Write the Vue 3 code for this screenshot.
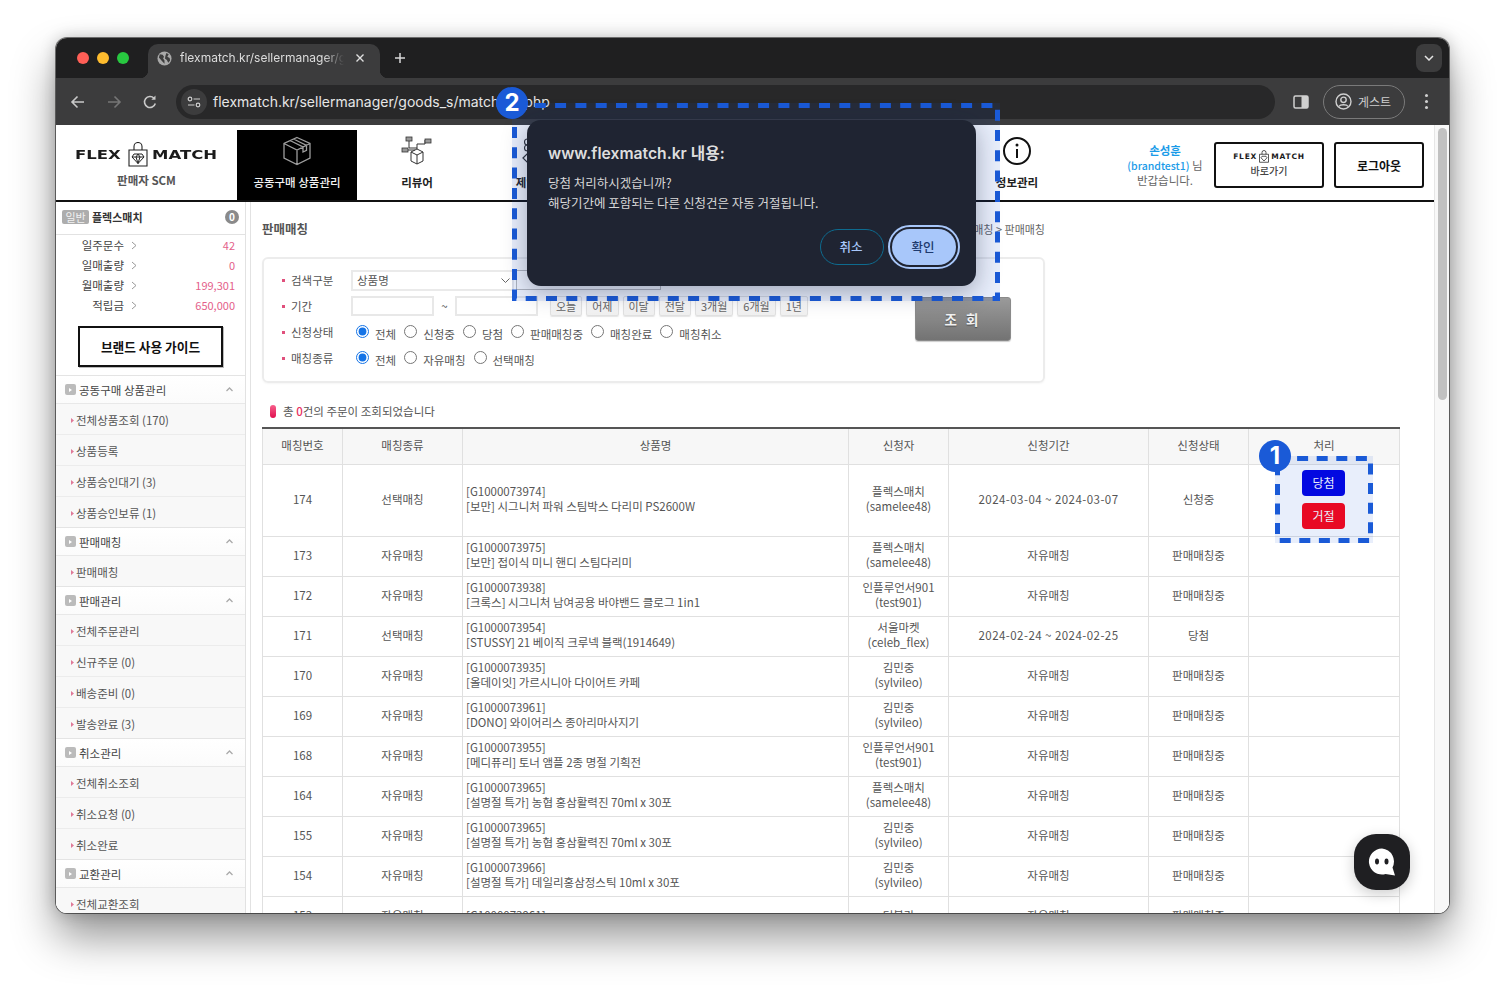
<script setup>
const summary = [
  { label: '일주문수', value: '42' },
  { label: '일매출량', value: '0' },
  { label: '월매출량', value: '199,301' },
  { label: '적립금', value: '650,000' },
]
const menu = [
  { title: '공동구매 상품관리', items: ['전체상품조회 (170)', '상품등록', '상품승인대기 (3)', '상품승인보류 (1)'] },
  { title: '판매매칭', items: ['판매매칭'] },
  { title: '판매관리', items: ['전체주문관리', '신규주문 (0)', '배송준비 (0)', '발송완료 (3)'] },
  { title: '취소관리', items: ['전체취소조회', '취소요청 (0)', '취소완료'] },
  { title: '교환관리', items: ['전체교환조회'] },
]
const periods = ['오늘', '어제', '이달', '전달', '3개월', '6개월', '1년']
const statusOptions = ['전체', '신청중', '당첨', '판매매칭중', '매칭완료', '매칭취소']
const kindOptions = ['전체', '자유매칭', '선택매칭']
const columns = ['매칭번호', '매칭종류', '상품명', '신청자', '신청기간', '신청상태', '처리']
const rows = [
  { no: 174, kind: '선택매칭', code: '[G1000073974]', name: '[보만] 시그니처 파워 스팀박스 다리미 PS2600W', user: '플렉스매치', id: '(samelee48)', period: '2024-03-04 ~ 2024-03-07', state: '신청중', actions: true },
  { no: 173, kind: '자유매칭', code: '[G1000073975]', name: '[보만] 접이식 미니 핸디 스팀다리미', user: '플렉스매치', id: '(samelee48)', period: '자유매칭', state: '판매매칭중' },
  { no: 172, kind: '자유매칭', code: '[G1000073938]', name: '[크록스] 시그니처 남여공용 바야밴드 클로그 1in1', user: '인플루언서901', id: '(test901)', period: '자유매칭', state: '판매매칭중' },
  { no: 171, kind: '선택매칭', code: '[G1000073954]', name: '[STUSSY] 21 베이직 크루넥 블랙(1914649)', user: '서울마켓', id: '(celeb_flex)', period: '2024-02-24 ~ 2024-02-25', state: '당첨' },
  { no: 170, kind: '자유매칭', code: '[G1000073935]', name: '[올데이잇] 가르시니아 다이어트 카페', user: '김민중', id: '(sylvileo)', period: '자유매칭', state: '판매매칭중' },
  { no: 169, kind: '자유매칭', code: '[G1000073961]', name: '[DONO] 와이어리스 종아리마사지기', user: '김민중', id: '(sylvileo)', period: '자유매칭', state: '판매매칭중' },
  { no: 168, kind: '자유매칭', code: '[G1000073955]', name: '[메디퓨리] 토너 앰플 2종 명절 기획전', user: '인플루언서901', id: '(test901)', period: '자유매칭', state: '판매매칭중' },
  { no: 164, kind: '자유매칭', code: '[G1000073965]', name: '[설명절 특가] 농협 홍삼활력진 70ml x 30포', user: '플렉스매치', id: '(samelee48)', period: '자유매칭', state: '판매매칭중' },
  { no: 155, kind: '자유매칭', code: '[G1000073965]', name: '[설명절 특가] 농협 홍삼활력진 70ml x 30포', user: '김민중', id: '(sylvileo)', period: '자유매칭', state: '판매매칭중' },
  { no: 154, kind: '자유매칭', code: '[G1000073966]', name: '[설명절 특가] 데일리홍삼정스틱 10ml x 30포', user: '김민중', id: '(sylvileo)', period: '자유매칭', state: '판매매칭중' },
  { no: 153, kind: '자유매칭', code: '[G1000073961]', name: '', user: '더블랑', id: '', period: '자유매칭', state: '판매매칭중' },
]
</script>

<template>
  <div class="stage">
    <div class="win">
      <div class="tabstrip">
        <div class="lights"><i class="red"></i><i class="yellow"></i><i class="green"></i></div>
        <div class="tab">
          <svg class="globe" width="15" height="15" viewBox="0 0 16 16"><circle cx="8" cy="8" r="7.500" fill="#a9a9a9"/><path d="M3 3.500l3 .5 1.500 2-1 2 1.500 2v3.500L5 10.500 2 7zM10 2l2.500 1.500L11 6l2.500 1.500L14 10l-2 2.500-1.500-3-2-1.500.5-3z" fill="#3d3d3d"/></svg>
          <span class="tab-title">flexmatch.kr/sellermanager/goods_s</span>
          <svg class="tab-x" width="10" height="10" viewBox="0 0 10 10"><path d="M1.500 1.500l7 7M8.500 1.500l-7 7" stroke="#e0e0e0" stroke-width="1.400"/></svg>
        </div>
        <svg class="plus" width="12" height="12" viewBox="0 0 12 12"><path d="M6 1v10M1 6h10" stroke="#d8d8d8" stroke-width="1.500"/></svg>
        <div class="tab-menu"><svg width="10" height="6" viewBox="0 0 10 6"><path d="M1 1l4 4 4-4" fill="none" stroke="#e4e4e4" stroke-width="1.500"/></svg></div>
      </div>

      <div class="toolbar">
        <svg class="nav-ico" width="16" height="14" viewBox="0 0 16 14"><path d="M14 7H2.500M7.500 1.500L2 7l5.500 5.500" fill="none" stroke="#c9c9c9" stroke-width="1.600"/></svg>
        <svg class="nav-ico" width="16" height="14" viewBox="0 0 16 14"><path d="M2 7h11.500M8.500 1.500L14 7l-5.500 5.500" fill="none" stroke="#767676" stroke-width="1.600"/></svg>
        <svg class="nav-ico last" width="16" height="16" viewBox="0 0 16 16"><path d="M13.300 9.500A5.500 5.500 0 1 1 12 4.200" fill="none" stroke="#c9c9c9" stroke-width="1.600"/><path d="M13.500 1.500v4.200H9.300z" fill="#c9c9c9"/></svg>
        <div class="omnibox">
          <span class="tune">
            <svg width="14" height="12" viewBox="0 0 14 12"><circle cx="3" cy="3" r="1.800" fill="none" stroke="#d0d0d0" stroke-width="1.200"/><path d="M6.500 3H13M1 9h6.500" stroke="#d0d0d0" stroke-width="1.200"/><circle cx="11" cy="9" r="1.800" fill="none" stroke="#d0d0d0" stroke-width="1.200"/></svg>
          </span>
          <span class="url">flexmatch.kr/sellermanager/goods_s/match_all.php</span>
        </div>
        <svg class="panel-ico" width="16" height="14" viewBox="0 0 16 14"><rect x="1" y="1" width="14" height="12" rx="1.500" fill="none" stroke="#d0d0d0" stroke-width="1.500"/><rect x="8.500" y="1" width="6.500" height="12" fill="#d0d0d0"/></svg>
        <div class="guest">
          <svg width="17" height="17" viewBox="0 0 17 17"><circle cx="8.500" cy="8.500" r="7.500" fill="none" stroke="#cfcfcf" stroke-width="1.400"/><circle cx="8.500" cy="6.800" r="2.700" fill="none" stroke="#cfcfcf" stroke-width="1.400"/><path d="M3.800 13.500c1.500-2.400 7.900-2.400 9.400 0" fill="none" stroke="#cfcfcf" stroke-width="1.400"/></svg>
          <span>게스트</span>
        </div>
        <div class="dots"><i></i><i></i><i></i></div>
      </div>

      <div class="page">
        <div class="content">
          <header class="site-head">
            <div class="brand">
              <div class="logo">
                <span class="w-flex">FLEX</span>
                <svg class="bag" width="20" height="25" viewBox="0 0 20 25"><path d="M1 8h18v16H1z" fill="none" stroke="#222" stroke-width="1.100"/><path d="M6 8V4.500a4 4 0 0 1 8 0V8" fill="none" stroke="#222" stroke-width="1.100"/><path d="M6 12h8l2 3-6 6.500L4 15zM4 15h12M10 21.500L8 15l2-3 2 3z" fill="none" stroke="#222" stroke-width="1"/></svg>
                <span class="w-match">MATCH</span>
              </div>
              <div class="brand-sub">판매자 SCM</div>
            </div>

            <div class="nav-tab active">
              <svg width="30" height="30" viewBox="0 0 30 30"><path d="M15 1.500L28 7.500V22L15 28.500 2 22V7.500zM2 7.500L15 14l13-6.500M15 14v14.500M8 4.500L21 11v5l3.500-1.700v-5L11.500 3" fill="none" stroke="#9d9d9d" stroke-width="1.300"/></svg>
              <span>공동구매 상품관리</span>
            </div>
            <div class="nav-tab">
              <svg width="32" height="30" viewBox="0 0 32 30"><path d="M10 16l6-3 6 3v9l-6 3-6-3zM10 16l6 3 6-3M16 19v9" fill="none" stroke="#333" stroke-width="1"/><path d="M8 5v7h8M7 14h7M16 13V8h8V4" fill="none" stroke="#333" stroke-width="1"/><rect x="5" y="1" width="6" height="4" fill="#999" stroke="#333" stroke-width=".8"/><rect x="1" y="12" width="6" height="4" fill="#999" stroke="#333" stroke-width=".8"/><rect x="24" y="3" width="6" height="4" fill="#999" stroke="#333" stroke-width=".8"/></svg>
              <span>리뷰어</span>
            </div>
            <div class="nav-tab">
              <svg width="30" height="30" viewBox="0 0 30 30"><circle cx="5.500" cy="6" r="3" fill="none" stroke="#333" stroke-width="1.100"/><circle cx="5.500" cy="12" r="3" fill="none" stroke="#333" stroke-width="1.100"/><path d="M1 22l5-5 5 5-5 5z" fill="none" stroke="#333" stroke-width="1.200"/></svg>
              <span>제안관리</span>
            </div>
            <div class="nav-tab"></div>
            <div class="nav-tab"></div>
            <div class="nav-tab"></div>
            <div class="nav-tab">
              <svg width="30" height="30" viewBox="0 0 30 30"><circle cx="15" cy="15" r="13" fill="none" stroke="#111" stroke-width="2"/><circle cx="15" cy="9" r="1.500" fill="#111"/><path d="M15 13v9" stroke="#111" stroke-width="2"/></svg>
              <span>정보관리</span>
            </div>

            <div class="head-right">
              <div class="greet">
                <b>손성훈</b>
                <div><em>(brandtest1)</em> 님</div>
                <div>반갑습니다.</div>
              </div>
              <button class="head-btn shortcut">
                <span class="logo small">
                  <span>FLEX</span>
                  <svg width="10" height="13" viewBox="0 0 20 25"><path d="M1 8h18v16H1z" fill="none" stroke="#222" stroke-width="1.500"/><path d="M6 8V4.500a4 4 0 0 1 8 0V8" fill="none" stroke="#222" stroke-width="1.500"/><path d="M6 12h8l2 3-6 6.500L4 15z" fill="none" stroke="#222" stroke-width="1.500"/></svg>
                  <span>MATCH</span>
                </span>
                <span class="shortcut-label">바로가기</span>
              </button>
              <button class="head-btn logout">로그아웃</button>
            </div>
          </header>

          <div class="body">
            <aside class="side">
              <div class="who">
                <span class="grade">일반</span>
                <b>플렉스매치</b>
                <span class="count">0</span>
              </div>
              <div class="stats">
                <div v-for="s in summary" :key="s.label" class="stat">
                  <span class="stat-label">{{ s.label }}</span>
                  <svg width="6" height="9" viewBox="0 0 6 9"><path d="M1 1l4 3.500L1 8" fill="none" stroke="#999" stroke-width="1"/></svg>
                  <span class="stat-value">{{ s.value }}</span>
                </div>
              </div>
              <button class="guide">브랜드 사용 가이드</button>
              <section v-for="m in menu" :key="m.title">
                <div class="menu-head">
                  <span class="menu-sq"><i></i></span>
                  <span>{{ m.title }}</span>
                  <svg class="menu-caret" width="7" height="5" viewBox="0 0 7 5"><path d="M.5 4L3.500 1l3 3" fill="none" stroke="#aaa" stroke-width="1.300"/></svg>
                </div>
                <div v-for="it in m.items" :key="it" class="menu-item">
                  <svg width="3" height="5" viewBox="0 0 3 5"><path d="M0 0l3 2.500L0 5z" fill="#e07a98"/></svg>
                  <span>{{ it }}</span>
                </div>
              </section>
            </aside>

            <main class="main">
              <div class="title-row">
                <h1>판매매칭</h1>
                <span class="crumb">판매매칭 &gt; 판매매칭</span>
              </div>

              <form class="search" @submit.prevent>
                <div class="search-rows">
                  <div class="s-row">
                    <label>검색구분</label>
                    <div class="fake-select">상품명<svg width="9" height="5" viewBox="0 0 9 5"><path d="M.5.500l4 4 4-4" fill="none" stroke="#666" stroke-width="1"/></svg></div>
                    <input class="keyword" type="text" />
                  </div>
                  <div class="s-row">
                    <label>기간</label>
                    <input class="date" type="text" />
                    <span class="tilde">~</span>
                    <input class="date" type="text" />
                    <div class="periods"><button v-for="p in periods" :key="p" type="button">{{ p }}</button></div>
                  </div>
                  <div class="s-row">
                    <label>신청상태</label>
                    <div class="radios">
                      <label v-for="(o, i) in statusOptions" :key="o"><input type="radio" name="status" :checked="i === 0" /><span>{{ o }}</span></label>
                    </div>
                  </div>
                  <div class="s-row">
                    <label>매칭종류</label>
                    <div class="radios">
                      <label v-for="(o, i) in kindOptions" :key="o"><input type="radio" name="kind" :checked="i === 0" /><span>{{ o }}</span></label>
                    </div>
                  </div>
                </div>
                <button class="go" type="button">조 회</button>
              </form>

              <div class="total"><i></i><span>총 <b>0</b>건의 주문이 조회되었습니다</span></div>

              <table class="grid">
                <colgroup>
                  <col class="c80" /><col class="c120" /><col class="c386" /><col class="c100" /><col class="c200" /><col class="c100" /><col />
                </colgroup>
                <thead>
                  <tr><th v-for="c in columns" :key="c">{{ c }}</th></tr>
                </thead>
                <tbody>
                  <tr v-for="r in rows" :key="r.no" :class="{ tall: r.actions }">
                    <td>{{ r.no }}</td>
                    <td>{{ r.kind }}</td>
                    <td class="product">{{ r.code }}<br />{{ r.name }}</td>
                    <td>{{ r.user }}<br />{{ r.id }}</td>
                    <td :class="{ dates: r.period.includes('~') }">{{ r.period }}</td>
                    <td>{{ r.state }}</td>
                    <td>
                      <div v-if="r.actions" class="acts">
                        <button class="win-btn">당첨</button>
                        <button class="rej-btn">거절</button>
                      </div>
                    </td>
                  </tr>
                </tbody>
              </table>
            </main>
          </div>
        </div>
        <div class="scroll"><div class="thumb"></div></div>
      </div>

      <div class="mark mark-one">
        <svg width="98" height="87"><rect x="2.500" y="2.500" width="93" height="82" fill="none" stroke="#1a5ad7" stroke-width="5" stroke-dasharray="11 8.600"/></svg>
      </div>
      <div class="mark-num num-one">1</div>

      <div class="mark mark-two">
        <svg width="488" height="198"><rect x="2.500" y="2.500" width="483" height="193" fill="none" stroke="#1a5ad7" stroke-width="5" stroke-dasharray="11 9.300"/></svg>
      </div>
      <div class="dialog">
        <h2>www.flexmatch.kr 내용:</h2>
        <p>당첨 처리하시겠습니까?<br />해당기간에 포함되는 다른 신청건은 자동 거절됩니다.</p>
        <div class="dialog-btns">
          <button class="d-cancel">취소</button>
          <button class="d-ok">확인</button>
        </div>
      </div>
      <div class="mark-num num-two">2</div>

      <div class="chat">
        <svg width="32" height="32" viewBox="0 0 32 32"><path d="M16 2.500a13 13 0 1 0 3.500 25.500l9.500 1.500-2.500-8A13 13 0 0 0 16 2.500z" fill="#fff"/><ellipse cx="11" cy="15.500" rx="2" ry="3" fill="#1f1f22"/><ellipse cx="20.500" cy="15.500" rx="2" ry="3" fill="#1f1f22"/></svg>
      </div>
    </div>
  </div>
</template>

<style>
html, body { background: #fff; }
</style>

<style scoped>
* { box-sizing: border-box; }
button { font-family: inherit; cursor: default; }
.stage { width: 1505px; height: 987px; padding: 38px 0 0 56px; overflow: hidden; }
.win {
  position: relative;
  width: 1393px;
  height: 875px;
  border-radius: 11px;
  overflow: hidden;
  display: flex;
  flex-direction: column;
  font-family: "Noto Sans CJK KR", "Noto Sans", sans-serif;
  font-size: 11.500px;
  color: #555;
  box-shadow: 0 24px 44px rgba(0, 0, 0, .42), 0 0 16px rgba(0, 0, 0, .22), 0 0 0 1px rgba(0, 0, 0, .5);
}

/* browser chrome */
.tabstrip { height: 40px; flex: none; display: flex; align-items: flex-end; background: #1f1f20; position: relative; }
.lights { display: flex; gap: 8px; margin: 0 0 14px 21px; width: 71px; }
.lights i { width: 12px; height: 12px; border-radius: 50%; display: block; }
.red { background: #ff5f57; }
.yellow { background: #febc2e; }
.green { background: #28c840; }
.tab { width: 232px; height: 34px; background: #3c3c3d; border-radius: 10px 10px 0 0; display: flex; align-items: center; padding: 0 11px 6px 9px; position: relative; }
.tab::before, .tab::after { content: ""; position: absolute; bottom: 0; width: 8px; height: 8px; }
.tab::before { left: -8px; background: radial-gradient(circle at 0 0, transparent 8px, #3c3c3d 8.500px); }
.tab::after { right: -8px; background: radial-gradient(circle at 100% 0, transparent 8px, #3c3c3d 8.500px); }
.globe { flex: none; }
.tab-title { font-family: Inter, sans-serif; font-size: 12px; line-height: 16px; color: #dcdcdc; margin-left: 8px; width: 164px; white-space: nowrap; overflow: hidden; -webkit-mask-image: linear-gradient(90deg, #000 88%, transparent); mask-image: linear-gradient(90deg, #000 88%, transparent); }
.tab-x { margin-left: 11px; }
.plus { margin: 0 0 14px 14px; }
.tab-menu { position: absolute; right: 7px; top: 6px; width: 26px; height: 28px; background: #3c3c3d; border-radius: 8px; display: flex; align-items: center; justify-content: center; }

.toolbar { height: 47px; flex: none; background: #3c3c3d; display: flex; align-items: center; padding-left: 14px; }
.nav-ico { margin-right: 20px; flex: none; }
.nav-ico.last { margin-right: 18px; }
.omnibox { width: 1099px; height: 34px; background: #282829; border-radius: 17px; display: flex; align-items: center; padding-left: 5px; }
.tune { width: 26px; height: 26px; border-radius: 50%; background: #3c3c3d; display: flex; align-items: center; justify-content: center; }
.url { font-family: Inter, sans-serif; font-size: 14px; color: #e6e6e6; margin-left: 6px; white-space: nowrap; }
.panel-ico { margin-left: 18px; }
.guest { width: 82px; height: 34px; margin-left: 14px; border: 1px solid #7a7a7a; border-radius: 17px; display: flex; align-items: center; gap: 6px; padding-left: 11px; color: #cfcfcf; font-size: 12px; }
.dots { margin-left: 20px; display: flex; flex-direction: column; gap: 3px; }
.dots i { display: block; width: 3px; height: 3px; border-radius: 50%; background: #d0d0d0; }

.page { flex: 1; min-height: 0; display: flex; background: #fff; }
.content { width: 1378px; flex: none; display: flex; flex-direction: column; overflow: hidden; }
.scroll { flex: 1; background: #f8f8f8; border-left: 1px solid #e6e6e6; padding: 3px 2px 0 3px; }
.thumb { height: 272px; background: #c1c1c1; border-radius: 5px; }

/* site header */
.site-head { height: 77px; flex: none; display: flex; border-bottom: 2px solid #111; padding-top: 5px; }
.brand { width: 181px; flex: none; display: flex; flex-direction: column; align-items: center; padding-top: 7px; }
.logo { display: flex; align-items: center; gap: 5px; font-family: "DejaVu Sans", sans-serif; font-weight: 700; font-size: 12.500px; color: #1b1b1b; line-height: 14px; }
.w-flex, .w-match { display: block; transform: scaleX(1.32); transform-origin: left center; white-space: nowrap; margin-left: -1px; }
.w-flex { width: 47px; margin-right: 1px; }
.w-match { width: 65px; }
.bag { flex: none; }
.brand-sub { font-size: 11.500px; font-weight: 700; color: #555; margin-top: 5px; line-height: 16px; }
.nav-tab { width: 120px; flex: none; display: flex; flex-direction: column; align-items: center; padding-top: 6px; font-size: 11.500px; font-weight: 700; color: #222; }
.nav-tab svg { height: 30px; }
.nav-tab span { margin-top: 8px; line-height: 17px; white-space: nowrap; }
.nav-tab.active { background: #000; color: #f2f2f2; font-weight: 500; }
.head-right { margin-left: auto; display: flex; gap: 10px; padding: 12px 10px 0 0; height: 58px; }
.greet { width: 82px; margin-right: -2px; text-align: center; font-size: 11.500px; line-height: 14.500px; color: #666; padding-top: 1px; }
.greet b { color: #1a9be8; font-weight: 700; display: block; }
.greet em { color: #1a9be8; font-style: normal; font-weight: 500; font-size: 10.500px; }
.head-btn { height: 46px; background: #fff; border: 2px solid #111; border-radius: 3px; color: #111; padding: 0; }
.shortcut { width: 110px; display: flex; flex-direction: column; align-items: center; justify-content: center; gap: 1px; padding-bottom: 4px; }
.logo.small { font-size: 7.500px; letter-spacing: .8px; gap: 2px; line-height: 13px; }
.shortcut-label { font-size: 10px; color: #444; font-weight: 500; line-height: 13px; }
.logout { width: 90px; font-size: 12px; font-weight: 700; }

.body { flex: 1; min-height: 0; display: flex; overflow: hidden; }
/* sidebar */
.side { width: 190px; flex: none; border-right: 1px solid #e2e2e2; }
.who { height: 33px; display: flex; align-items: center; padding: 0 6px 2px; border-bottom: 1px solid #e2e2e2; }
.grade { background: #adadad; color: #f2f2f2; font-size: 11px; width: 27px; height: 14px; line-height: 14px; text-align: center; border-radius: 2px; }
.who b { margin-left: 3px; color: #333; font-weight: 700; font-size: 11px; }
.count { margin-left: auto; width: 14px; height: 14px; border-radius: 50%; background: #8a8a8a; color: #fff; text-align: center; line-height: 14px; font-size: 10px; font-weight: 700; }
.stats { height: 80px; }
.stat { height: 20px; display: flex; align-items: center; }
.stat-label { width: 68px; text-align: right; color: #444; }
.stat svg { margin-left: 7px; }
.stat-value { margin-left: auto; margin-right: 10px; color: #e4608a; font-size: 11px; }
.guide { display: block; width: 145px; height: 41px; margin: 11px 0 9px 22px; background: #fff; border: 2px solid #111; box-shadow: 1px 1px 0 #bbb; border-radius: 0; font-size: 12.700px; font-weight: 700; color: #111; padding: 0; }
.menu-head { height: 28px; display: flex; align-items: center; padding-left: 9px; color: #444; background: linear-gradient(#fff, #fbfbfb); border-bottom: 1px solid #e8e8e8; box-shadow: 0 -1px 0 #e4e4e4; gap: 3px; position: relative; }
.menu-sq { width: 11px; height: 11px; background: #bbb; border-radius: 2px; display: flex; align-items: center; justify-content: center; }
.menu-sq i { border-left: 3px solid #fff; border-top: 2px solid transparent; border-bottom: 2px solid transparent; }
.menu-caret { position: absolute; left: 170px; top: 11px; }
.menu-item { height: 31px; display: flex; align-items: center; padding: 2px 0 0 15px; gap: 2px; background: #f8f8f8; border-bottom: 1px solid #ececec; color: #555; }

/* main */
.main { flex: 1; min-width: 0; border-left: 1px solid #e2e2e2; margin-left: 4px; padding: 0 34px 0 11px; }
.title-row { height: 55px; display: flex; justify-content: space-between; align-items: flex-start; padding-top: 17px; width: 783px; }
.title-row h1 { margin: 0; font-size: 12.500px; font-weight: 700; color: #555; line-height: 20px; }
.crumb { color: #666; font-size: 11px; line-height: 20px; }
.search { width: 783px; height: 126px; border: 2px solid #ececec; border-radius: 6px; display: flex; padding: 8px 32px 0 18px; box-shadow: 0 1px 2px rgba(0,0,0,.04); }
.search-rows { flex: 1; }
.s-row { height: 26px; display: flex; align-items: center; }
.s-row > label { width: 69px; flex: none; padding-left: 9px; position: relative; color: #555; line-height: 18px; }
.s-row > label::before { content: ""; position: absolute; left: 0; top: 8px; width: 3px; height: 3px; background: #e0507c; }
.fake-select { width: 163px; height: 21px; border: 2px solid #eaeaea; display: flex; align-items: center; justify-content: space-between; padding: 0 2px 0 4px; color: #555; }
.keyword { width: 145px; height: 20px; margin-left: 2px; border: 1px solid #bbb; }
.date { width: 83px; height: 20px; border: 2px solid #e8e8e8; background: #fff; padding: 0; }
.tilde { width: 21px; text-align: center; }
.periods { display: flex; gap: 4px; margin-left: 12px; }
.periods button { height: 20px; padding: 0 5px; background: linear-gradient(#fff, #f1f1f1); border: 1px solid #e2e2e2; border-radius: 2px; color: #666; font-size: 11px; line-height: 16px; box-shadow: 0 1px 1px rgba(0,0,0,.1); }
.radios { display: flex; gap: 8px; padding-left: 5px; }
.radios label { display: flex; align-items: center; gap: 6px; }
.radios input { margin: 0 0 2px; width: 13px; height: 13px; accent-color: #1473e6; }
.radios span { padding-top: 4px; line-height: 15px; }
.go { width: 96px; height: 44px; margin-top: 30px; flex: none; background: linear-gradient(#9a9a9a, #737373); border: 1px solid #8a8a8a; border-radius: 3px; color: #f2f2f2; font-size: 13.500px; font-weight: 700; letter-spacing: 3px; text-shadow: 0 1px 1px rgba(0,0,0,.4); box-shadow: 0 1px 1px rgba(0,0,0,.2); padding: 0; }
.total { height: 44px; display: flex; align-items: center; padding: 12px 0 0 8px; gap: 7px; color: #555; }
.total i { width: 6px; height: 13px; border-radius: 3px; background: linear-gradient(#f7608c, #e0104f); }
.total b { color: #e8305f; font-weight: 500; }
.grid { width: 1138px; table-layout: fixed; border-collapse: collapse; border-top: 2px solid #555; }
.c80 { width: 80px; }
.c120 { width: 120px; }
.c386 { width: 386px; }
.c100 { width: 100px; }
.c200 { width: 200px; }
.grid th { height: 36px; background: #f7f7f7; font-weight: 400; color: #555; border: 1px solid #e0e0e0; border-top: none; padding: 0 0 2px; }
.grid td { height: 40px; text-align: center; border: 1px solid #e0e0e0; padding: 0 0 2px; line-height: 15px; color: #555; }
.grid tr.tall td { height: 72px; }
.grid td.product { text-align: left; padding-left: 3px; }
.grid td.dates { letter-spacing: .45px; }
.acts { display: flex; flex-direction: column; align-items: center; gap: 7px; padding-right: 1px; }
.acts button { width: 43px; height: 26px; border: none; border-radius: 4px; color: #fff; font-size: 12px; padding: 0; }
.win-btn { background: #0000e2; }
.rej-btn { background: #ff0010; }

/* annotations */
.mark { position: absolute; background: rgba(28, 90, 215, .1); }
.mark svg { display: block; }
.mark-one { left: 1219px; top: 418px; width: 98px; height: 87px; }
.mark-two { left: 456px; top: 65px; width: 488px; height: 198px; }
.mark-num { position: absolute; width: 32px; height: 32px; border-radius: 50%; background: #1a5ad7; color: #fff; font-family: Inter, sans-serif; font-weight: 700; font-size: 24px; line-height: 32px; text-align: center; }
.num-one { left: 1203px; top: 402px; }
.num-two { left: 440px; top: 49px; }
.dialog { position: absolute; left: 471px; top: 82px; width: 449px; height: 166px; background: #1f2432; border-radius: 14px; box-shadow: 0 6px 24px rgba(20, 30, 60, .35); padding: 24px 20px 0 21px; color: #dcdcdc; }
.dialog h2 { margin: 0; font-family: Inter, "Noto Sans CJK KR", sans-serif; font-size: 15.700px; font-weight: 600; line-height: 20px; color: #dedede; }
.dialog p { margin: 9px 0 0; font-size: 12.500px; line-height: 20px; color: #d8d8d8; }
.dialog-btns { position: absolute; right: 20px; bottom: 21px; display: flex; gap: 8px; }
.dialog-btns button { width: 64px; height: 36px; border-radius: 18px; font-size: 12.500px; font-weight: 500; padding: 0 2px 1px 0; }
.d-cancel { background: transparent; border: 1px solid #0e6b8f; color: #a8c7fa; }
.d-ok { background: #a8c7fa; border: none; color: #1e3a6e; outline: 2px solid #a8c7fa; outline-offset: 2px; }
.chat { position: absolute; left: 1298px; top: 796px; width: 56px; height: 56px; border-radius: 22px; background: #1f1f22; box-shadow: 0 4px 14px rgba(0, 0, 0, .2); display: flex; align-items: center; justify-content: center; }
.brand { padding-top: 12px; }
</style>
